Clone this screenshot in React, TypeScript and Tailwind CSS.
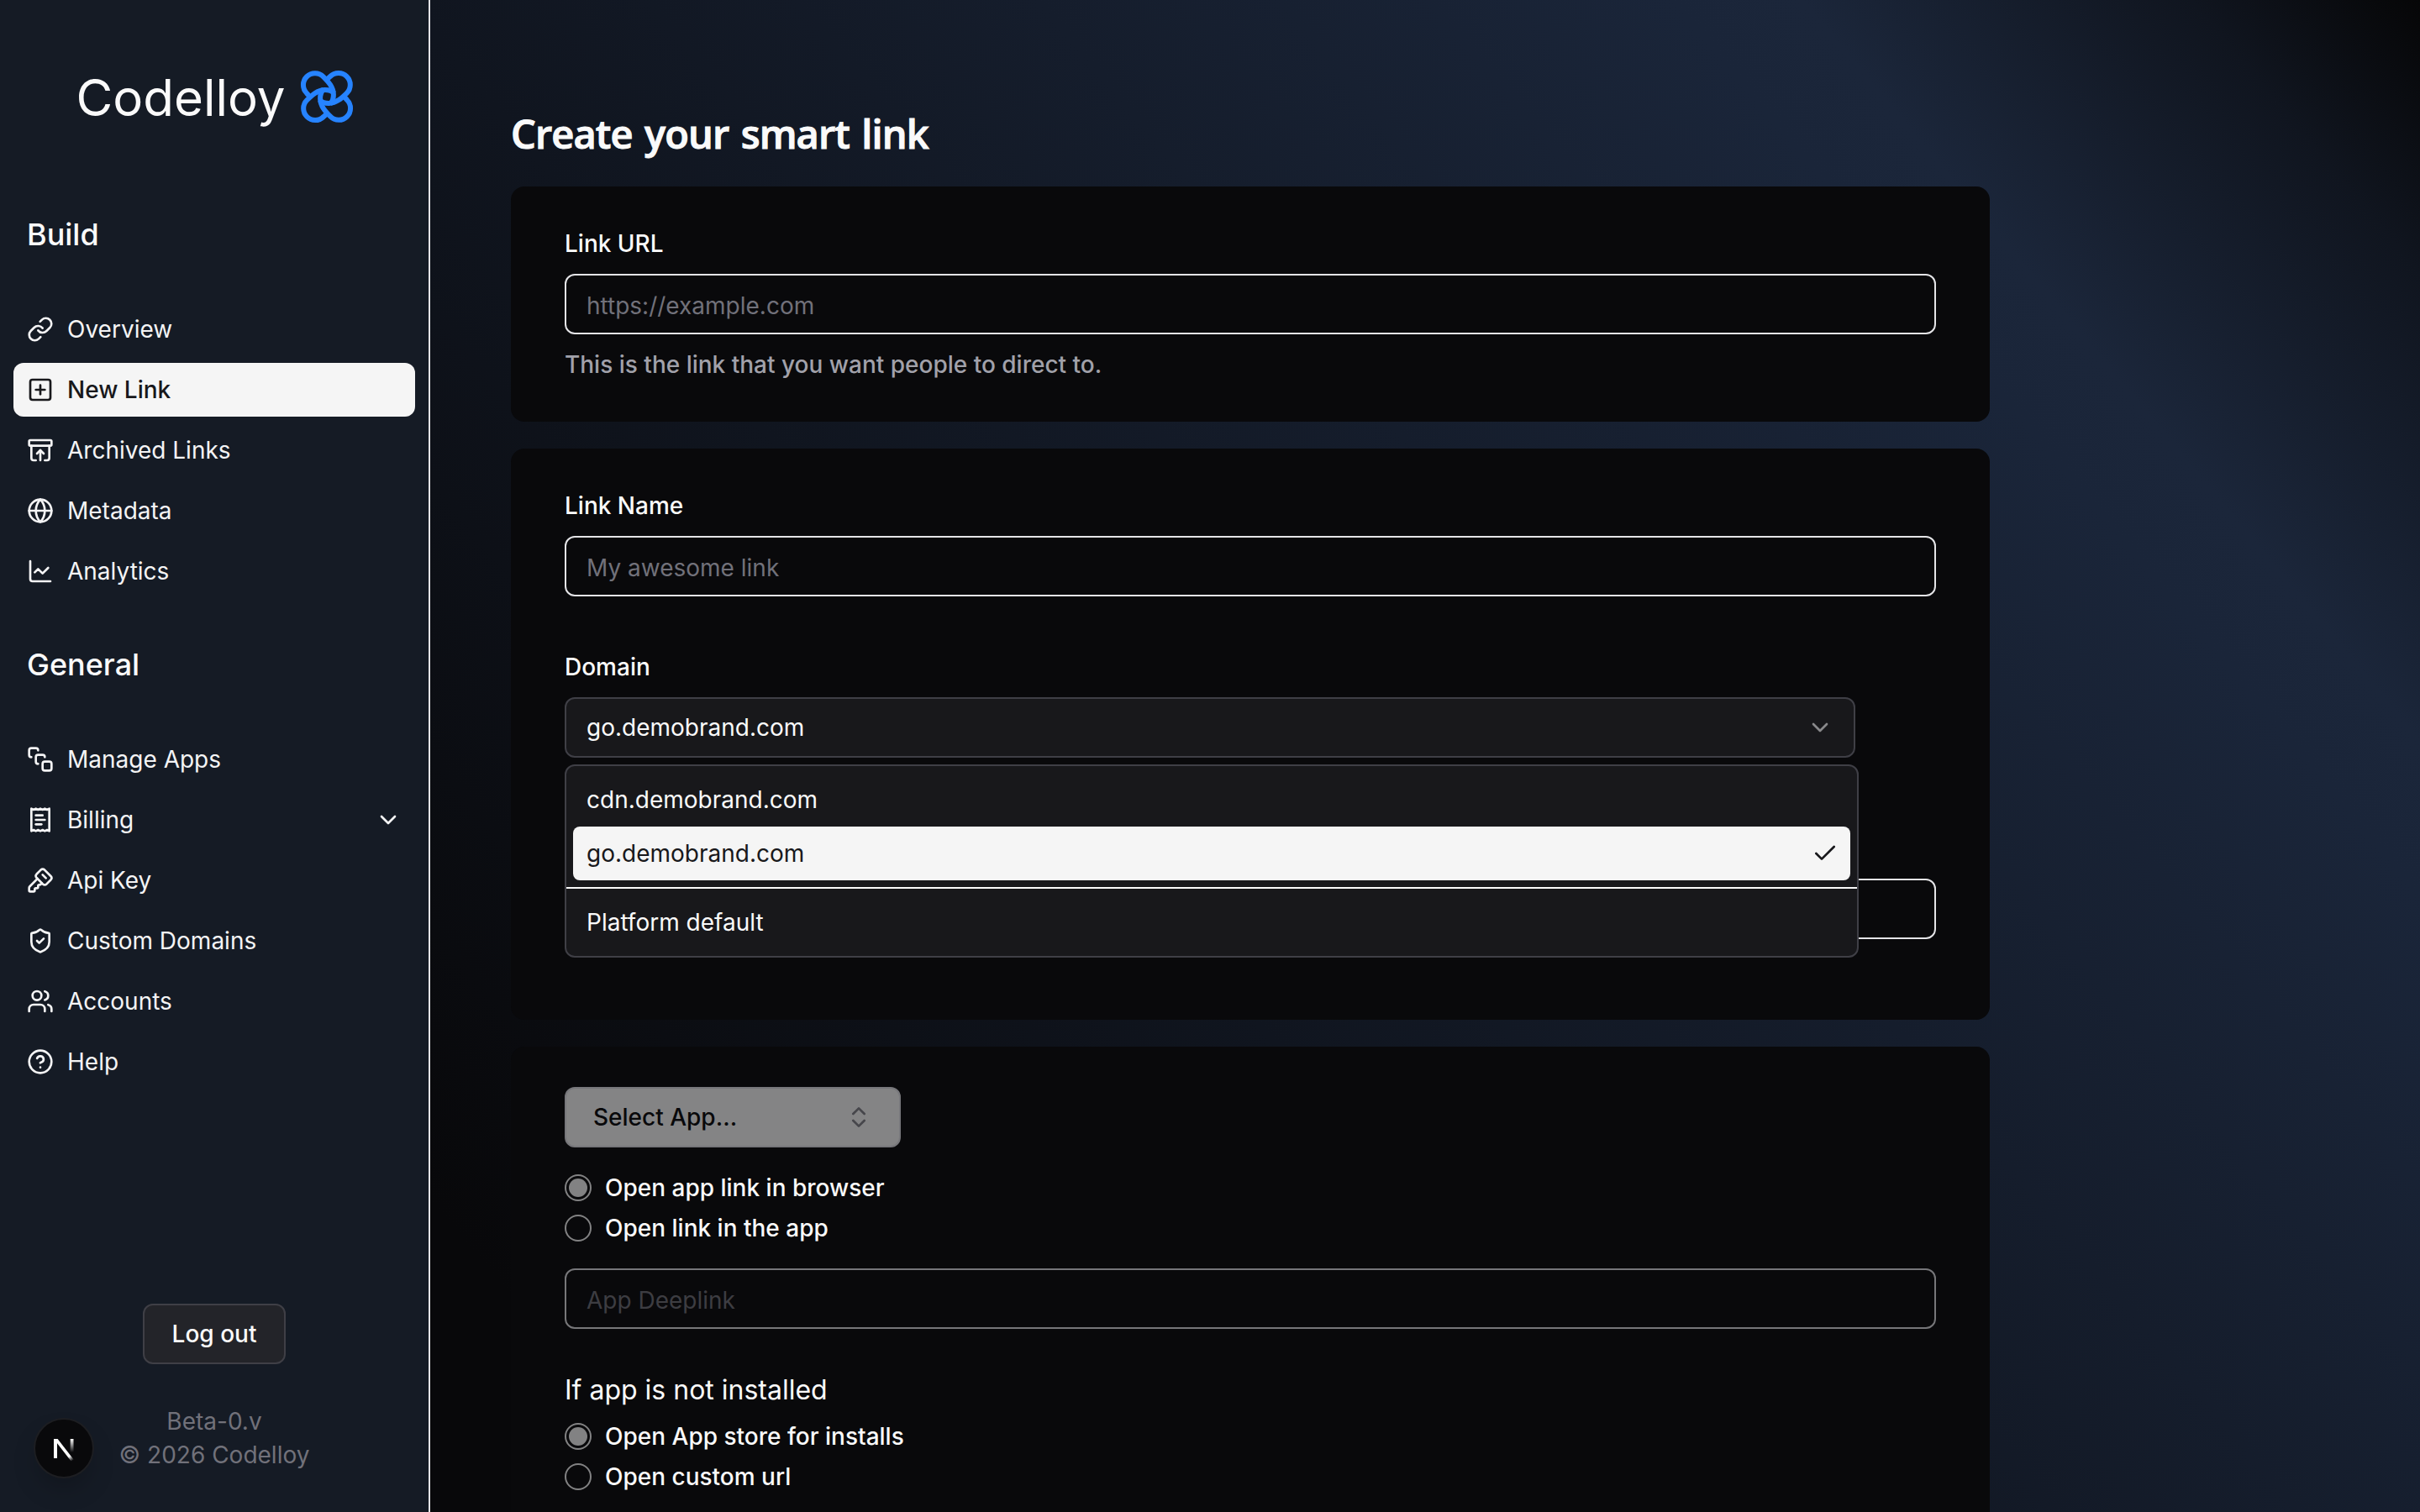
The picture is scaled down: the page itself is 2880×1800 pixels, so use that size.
import React from "react";
import {
  ArchiveRestore,
  ChartLine,
  Check,
  ChevronDown,
  ChevronsUpDown,
  CircleQuestionMark,
  Globe,
  KeySquare,
  Link,
  ShieldCheck,
  SquarePlus,
  SquareStack,
  Users,
} from "lucide-react";

type IconType = React.ComponentType<{ className?: string }>;

function ReceiptIcon({ className }: { className?: string }) {
  return (
    <svg
      viewBox="0 0 24 24"
      fill="none"
      stroke="currentColor"
      strokeWidth={2}
      strokeLinecap="round"
      strokeLinejoin="round"
      className={className}
    >
      <path d="M4 2v20l2-1 2 1 2-1 2 1 2-1 2 1 2-1 2 1V2l-2 1-2-1-2 1-2-1-2 1-2-1-2 1Z" />
      <path d="M14 8H8" />
      <path d="M16 12H8" />
      <path d="M13 16H8" />
    </svg>
  );
}

function KnotLogo() {
  const petal = "M-20.5 0L-24 -4A13.8 13.8 0 0 1 -4.2 -23.7C2 -17.5 7.7 -11.5 7.9 -2.5C8 2.5 6.6 6 3.8 8.8";
  return (
    <svg
      viewBox="-32 -32 64 64"
      className="mb-[2px] size-16"
      fill="none"
      stroke="#2683ff"
      strokeWidth={6}
      strokeLinejoin="round"
    >
      <path d={petal} />
      <path d={petal} transform="rotate(90)" />
      <path d={petal} transform="rotate(180)" />
      <path d={petal} transform="rotate(270)" />
    </svg>
  );
}

function NextBadge() {
  return (
    <div className="absolute bottom-[40px] left-[40px] flex size-[72px] items-center justify-center rounded-full border-2 border-[#1d1e22] bg-[#09090b] pt-1 shadow-[0_16px_32px_-8px_rgba(0,0,0,0.25)]">
      <svg viewBox="0 0 26 28" className="h-[28px] w-[26px]" fill="none">
        <defs>
          <linearGradient id="nd" x1="14" y1="14" x2="23" y2="27" gradientUnits="userSpaceOnUse">
            <stop stopColor="#fff" />
            <stop offset="0.6" stopColor="#fff" />
            <stop offset="1" stopColor="#fff" stopOpacity="0" />
          </linearGradient>
          <linearGradient id="nv" x1="0" y1="1" x2="0" y2="17" gradientUnits="userSpaceOnUse">
            <stop stopColor="#fff" />
            <stop offset="1" stopColor="#fff" stopOpacity="0" />
          </linearGradient>
        </defs>
        <path d="M3 24V1" stroke="#fff" strokeWidth="4" />
        <path d="M1 1H5.6L25 26L22 28Z" fill="url(#nd)" />
        <path d="M22.6 1V17" stroke="url(#nv)" strokeWidth="3.8" />
      </svg>
    </div>
  );
}

function NavItem({
  icon: Icon,
  label,
  active,
  chevron,
}: {
  icon: IconType;
  label: string;
  active?: boolean;
  chevron?: boolean;
}) {
  return (
    <a
      className={
        active
          ? "flex h-16 items-center gap-4 rounded-xl bg-[#f5f5f5] px-4 font-medium text-[#18181b]"
          : "flex h-16 items-center gap-4 rounded-xl px-4 text-[#f4f4f5]"
      }
    >
      <Icon className="size-8 shrink-0" />
      <span>{label}</span>
      {chevron && <ChevronDown className="ml-auto size-8" />}
    </a>
  );
}

function Sidebar() {
  return (
    <aside className="relative flex h-full w-[512px] shrink-0 flex-col border-r-2 border-[#e4e4e7] bg-[#151b25] px-4 text-[#fafafa]">
      <div className="flex h-[231px] items-center justify-center gap-[17px] pl-px text-[60px] leading-none">
        <span>Codelloy</span>
        <KnotLogo />
      </div>
      <h2 className="mt-5 px-4 text-[36px] leading-[56px] font-medium">Build</h2>
      <nav className="mt-[53px] flex flex-col gap-2">
        <NavItem icon={Link} label="Overview" />
        <NavItem icon={SquarePlus} label="New Link" active />
        <NavItem icon={ArchiveRestore} label="Archived Links" />
        <NavItem icon={Globe} label="Metadata" />
        <NavItem icon={ChartLine} label="Analytics" />
      </nav>
      <h2 className="mt-[51px] px-4 text-[36px] leading-[56px] font-medium">General</h2>
      <nav className="mt-[53px] flex flex-col gap-2">
        <NavItem icon={SquareStack} label="Manage Apps" />
        <NavItem icon={ReceiptIcon} label="Billing" chevron />
        <NavItem icon={KeySquare} label="Api Key" />
        <NavItem icon={ShieldCheck} label="Custom Domains" />
        <NavItem icon={Users} label="Accounts" />
        <NavItem icon={CircleQuestionMark} label="Help" />
      </nav>
      <div className="mt-auto flex flex-col items-center pb-12">
        <button className="h-[72px] w-[170px] rounded-xl border-2 border-[#3f3f46] bg-[#232429] font-medium">
          Log out
        </button>
        <p className="mt-12 text-center leading-10 text-[#71717a]">
          Beta-0.v
          <br />© 2026 Codelloy
        </p>
      </div>
      <NextBadge />
    </aside>
  );
}

const inputClass =
  "block h-[72px] w-full rounded-xl border-2 border-[#e4e4e7] bg-transparent px-6 pt-1 text-[28px] placeholder:text-[#71717a] placeholder:opacity-100";

function Radio({ label, checked }: { label: string; checked?: boolean }) {
  return (
    <label className="flex h-8 items-center gap-4 leading-none font-medium">
      <span className="flex size-8 items-center justify-center rounded-full border-2 border-[#828283]">
        {checked && <span className="size-[22px] rounded-full bg-[#828283]" />}
      </span>
      {label}
    </label>
  );
}

function DomainMenu() {
  return (
    <div className="absolute top-[80px] left-0 z-10 w-[1540px] rounded-xl border-2 border-[#3f3f46] bg-[#18181b] py-2">
      <div className="px-2">
        <div className="flex h-16 items-center px-4">cdn.demobrand.com</div>
        <div className="flex h-16 items-center justify-between rounded-lg bg-[#f5f5f5] pr-[14px] pl-4 text-[#18181b]">
          go.demobrand.com
          <Check className="size-8" />
        </div>
      </div>
      <div className="my-2 h-0.5 bg-[#fafafa]" />
      <div className="px-2">
        <div className="flex h-16 items-center px-4">Platform default</div>
      </div>
    </div>
  );
}

export default function App() {
  return (
    <div className="flex h-[1800px] w-[2880px] overflow-hidden bg-[#09090b] font-['Inter',sans-serif] text-[28px] text-[#fafafa] antialiased">
      <Sidebar />
      <main className="h-full flex-1 bg-[linear-gradient(50.2deg,#08080a_8%,#10151f_38%,#1a2539_77%,#1b263a_81%,#10151f_93%,#060607_100%)] pt-[127px] pl-24">
        <h1 className="h-16 w-[1760px] font-['Open_Sans',sans-serif] text-[47px] leading-[64px] font-semibold tracking-[-0.9px] [word-spacing:3px] [-webkit-text-stroke:1px_#fafafa] [stroke-linejoin:round]">
          Create your smart link
        </h1>
        <div className="mt-[31px] flex w-[1760px] flex-col gap-8">
          <section className="rounded-2xl bg-[#09090b] px-16 py-12">
            <div className="mb-4 leading-10 font-medium">Link URL</div>
            <input className={inputClass} placeholder="https://example.com" />
            <p className="mt-4 leading-10 font-medium text-[#a1a1aa]">
              This is the link that you want people to direct to.
            </p>
          </section>

          <section className="rounded-2xl bg-[#09090b] px-16 pt-12 pb-24">
            <div className="mb-4 leading-10 font-medium">Link Name</div>
            <input className={inputClass} placeholder="My awesome link" />
            <div className="mt-16 mb-4 leading-10 font-medium">Domain</div>
            <div className="relative">
              <div className="flex h-[72px] w-[1536px] items-center justify-between rounded-xl border-2 border-[#3f3f46] bg-[#18181b] px-6">
                go.demobrand.com
                <ChevronDown className="size-8 opacity-50" />
              </div>
              <DomainMenu />
            </div>
            <input className={`${inputClass} mt-36`} />
          </section>

          <section className="rounded-2xl bg-[#09090b] px-16 pt-12 pb-24">
            <button className="flex h-[72px] w-[400px] items-center justify-between rounded-xl border-2 border-[#77777b] bg-[#848485] px-8 font-medium text-[#09090b]">
              Select App...
              <ChevronsUpDown className="size-8 text-[#46464b]" />
            </button>
            <div className="mt-8 flex flex-col gap-4">
              <Radio label="Open app link in browser" checked />
              <Radio label="Open link in the app" />
            </div>
            <input className={`${inputClass} mt-8 opacity-50`} placeholder="App Deeplink" />
            <div className="mt-[49px] text-[32px] leading-[48px]">If app is not installed</div>
            <div className="mt-[15px] flex flex-col gap-4">
              <Radio label="Open App store for installs" checked />
              <Radio label="Open custom url" />
            </div>
          </section>
        </div>
      </main>
    </div>
  );
}
